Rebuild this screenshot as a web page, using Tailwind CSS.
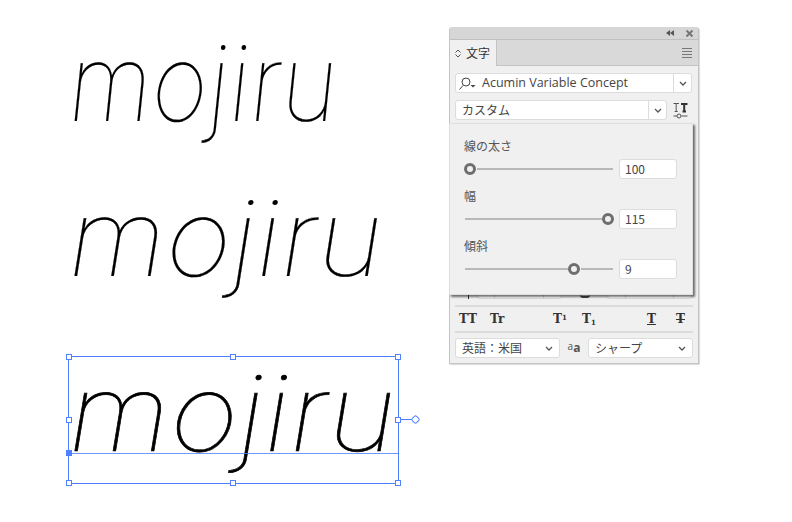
<!DOCTYPE html>
<html lang="ja">
<head>
    <meta charset="utf-8" />
    <title>mojiru</title>
    <script src="https://cdn.jsdelivr.net/npm/@tailwindcss/browser@4"></script>
</head>
<body class="relative w-[792px] h-[522px] overflow-hidden bg-white font-['Noto_Sans_CJK_JP','Noto_Sans',sans-serif]">
    <!-- artboard text -->
    <div class="absolute left-[68px] top-[18px] text-[106px] leading-[130px] italic font-thin text-black font-['Inter',sans-serif] whitespace-nowrap origin-left scale-x-[0.91] skew-x-[3deg] [-webkit-text-stroke:0.15px_black]">mojiru</div>
    <div class="absolute left-[68px] top-[173px] text-[106px] leading-[130px] italic font-thin text-black font-['Inter',sans-serif] whitespace-nowrap origin-left scale-x-[1.065] skew-x-[1deg] [-webkit-text-stroke:0.2px_black]">mojiru</div>
    <div class="absolute left-[68px] top-[348px] text-[106px] leading-[130px] italic font-thin text-black font-['Inter',sans-serif] whitespace-nowrap origin-left scale-x-[1.11] skew-x-[1deg] [-webkit-text-stroke:0.65px_black]">mojiru</div>

    <!-- selection box -->
    <div class="absolute left-[68px] top-[356px] w-[331px] h-[128px] border border-[#4f80ff]">
        <div class="absolute left-0 right-0 top-[96px] h-px bg-[#4f80ff]/80"></div>
        <div class="absolute -left-[3px] top-[93px] w-[6px] h-[6px] bg-[#4f80ff]"></div>
        <div class="absolute -left-[3px] -top-[3px] w-[6px] h-[6px] bg-white border border-[#4f80ff]"></div>
        <div class="absolute left-[161px] -top-[3px] w-[6px] h-[6px] bg-white border border-[#4f80ff]"></div>
        <div class="absolute -right-[3px] -top-[3px] w-[6px] h-[6px] bg-white border border-[#4f80ff]"></div>
        <div class="absolute -left-[3px] top-[60px] w-[6px] h-[6px] bg-white border border-[#4f80ff]"></div>
        <div class="absolute -right-[3px] top-[60px] w-[6px] h-[6px] bg-white border border-[#4f80ff]"></div>
        <div class="absolute -left-[3px] -bottom-[3px] w-[6px] h-[6px] bg-white border border-[#4f80ff]"></div>
        <div class="absolute left-[161px] -bottom-[3px] w-[6px] h-[6px] bg-white border border-[#4f80ff]"></div>
        <div class="absolute -right-[3px] -bottom-[3px] w-[6px] h-[6px] bg-white border border-[#4f80ff]"></div>
        <div class="absolute -right-[14px] top-[62px] w-[11px] h-px bg-[#4f80ff]"></div>
        <div class="absolute -right-[21px] top-[59px] w-[7px] h-[7px] rotate-45 bg-white border border-[#4f80ff] rounded-[2px]"></div>
    </div>

    <!-- character panel -->
    <div class="absolute left-[449px] top-[27px] w-[250px] h-[337px] bg-[#f0f0f0] border-x border-b border-[#c4c4c4] rounded-t-[3px] shadow-[1px_1px_1px_rgba(0,0,0,0.15)] text-[12px] text-[#444] flex flex-col">
        <div class="h-[13px] bg-[#d6d6d6] border-b border-[#c0c0c0] flex items-center justify-end gap-[12px] pr-[5px] rounded-t-[3px]">
            <svg width="8" height="6" viewBox="0 0 8 6" fill="#555"><path d="M4 0v6L0 3zM8 0v6L4 3z"/></svg>
            <svg width="7" height="7" viewBox="0 0 7 7" stroke="#777" stroke-width="2"><path d="M0.500 0.500l6 6M6.500 0.500l-6 6"/></svg>
        </div>
        <div class="h-[26px] bg-[#d9d9d9] border-b border-[#c4c4c4] flex items-stretch justify-between">
            <div class="w-[47px] -mb-px bg-[#f0f0f0] border-r border-[#c4c4c4] flex items-center pl-[5px] gap-[5px] text-[12px] text-[#333]">
                <svg width="6" height="9" viewBox="0 0 6 9" fill="none" stroke="#555"><path d="M0.500 3.500L3 1l2.500 2.500M0.500 5.500L3 8l2.500-2.500"/></svg>
                <span>文字</span>
            </div>
            <div class="flex flex-col justify-center gap-[2px] pr-[6px]">
                <div class="w-[10px] h-px bg-[#777]"></div>
                <div class="w-[10px] h-px bg-[#777]"></div>
                <div class="w-[10px] h-px bg-[#777]"></div>
                <div class="w-[10px] h-px bg-[#777]"></div>
            </div>
        </div>
        <div class="flex-1 flex flex-col px-[5px] pt-[7px]">
            <div class="h-[20px] w-[237px] bg-white border border-[#dcdcdc] rounded-[3px] flex items-center">
                <svg class="ml-[2px]" width="18" height="13" viewBox="0 0 18 13" fill="none" stroke="#444"><circle cx="8" cy="5" r="4"/><path d="M5 8.500L1.500 12.500"/><path d="M12.500 8h5L15 10.500z" fill="#444" stroke="none"/></svg>
                <span class="ml-[6px] flex-1 text-[12.500px] font-['Open_Sans',sans-serif] text-[#444]">Acumin Variable Concept</span>
                <div class="w-[18px] h-full border-l border-[#dcdcdc] flex items-center justify-center">
                    <svg width="8" height="5" viewBox="0 0 8 5" fill="none" stroke="#555" stroke-width="1.300"><path d="M1 1l3 3 3-3"/></svg>
                </div>
            </div>
            <div class="mt-[7px] flex items-center gap-[6px]">
                <div class="h-[20px] w-[212px] bg-white border border-[#dcdcdc] rounded-[3px] flex items-center">
                    <span class="ml-[6px] flex-1 text-[12px] text-[#444]">カスタム</span>
                    <div class="w-[18px] h-full border-l border-[#dcdcdc] flex items-center justify-center">
                        <svg width="8" height="5" viewBox="0 0 8 5" fill="none" stroke="#555" stroke-width="1.300"><path d="M1 1l3 3 3-3"/></svg>
                    </div>
                </div>
                <svg width="15" height="17" viewBox="0 0 15 17" fill="none" stroke="#555"><path d="M0.500 1.500h5.500M3.200 1.500v8M1.700 9.500h3"/><path d="M8 2h6.500M11.200 2v7.500M9.500 9.500h3.500" stroke-width="2" stroke="#333"/><path d="M0.500 14h3.500M8.500 14h6"/><circle cx="6" cy="14" r="2"/></svg>
            </div>
            <!-- row hidden behind the popup -->
            <div class="mt-[159px] flex h-[20px]">
                <div class="w-[22px] flex items-end"><div class="ml-[13px] w-px h-[6px] bg-[#333]"></div></div>
                <div class="w-[85px] flex border border-[#dcdcdc] rounded-[3px] bg-white">
                    <div class="w-[17px] border-r border-[#dcdcdc] flex items-end justify-center pb-[3px]"><svg width="5" height="3" viewBox="0 0 5 3" fill="#333"><path d="M0 0h5L2.500 3z"/></svg></div>
                    <div class="flex-1"></div>
                    <div class="w-[18px] border-l border-[#dcdcdc]"></div>
                </div>
                <div class="w-[45px] flex items-end justify-center pb-[1px]"><div class="w-[10px] h-[3px] rounded-b-[5px] border-b-2 border-[#444]"></div></div>
                <div class="w-[85px] flex border border-[#dcdcdc] rounded-[3px] bg-white">
                    <div class="w-[18px] border-r border-[#dcdcdc] flex items-end justify-center pb-[3px]"><svg width="5" height="3" viewBox="0 0 5 3" fill="#333"><path d="M0 0h5L2.500 3z"/></svg></div>
                    <div class="flex-1"></div>
                    <div class="w-[18px] border-l border-[#dcdcdc]"></div>
                </div>
            </div>
            <div class="mt-[6px] h-[2px] bg-[#dcdcdc]"></div>
            <div class="h-[24px] flex items-center text-[12px] font-bold font-['DejaVu_Serif',serif] text-[#333]">
                <span class="ml-[4px] w-[31px] tracking-[0.5px]">TT</span>
                <span class="w-[63px]">Tr</span>
                <span class="w-[29px]">T<sup class="text-[7px]">1</sup></span>
                <span class="w-[65px]">T<sub class="text-[7px]">1</sub></span>
                <span class="w-[29px] underline">T</span>
                <span class="line-through">T</span>
            </div>
            <div class="h-[2px] bg-[#dcdcdc]"></div>
            <div class="mt-[5px] flex items-center text-[12px] text-[#444]">
                <div class="h-[20px] w-[105px] bg-white border border-[#dcdcdc] rounded-[3px] flex items-center justify-between px-[6px]">
                    <span>英語：米国</span>
                    <svg width="8" height="5" viewBox="0 0 8 5" fill="none" stroke="#555" stroke-width="1.300"><path d="M1 1l3 3 3-3"/></svg>
                </div>
                <span class="w-[28px] flex justify-center items-end font-['Open_Sans',sans-serif] text-[#555]"><span class="text-[10px] -translate-y-[3px]">a</span><span class="text-[12px] font-bold">a</span></span>
                <div class="h-[20px] w-[105px] bg-white border border-[#dcdcdc] rounded-[3px] flex items-center justify-between px-[6px]">
                    <span>シャープ</span>
                    <svg width="8" height="5" viewBox="0 0 8 5" fill="none" stroke="#555" stroke-width="1.300"><path d="M1 1l3 3 3-3"/></svg>
                </div>
            </div>
        </div>

        <!-- variable font popup -->
        <div class="absolute -left-px top-[96px] w-[244px] h-[172px] bg-[#f0f0f0] border border-[#dedede] shadow-[2px_2px_2px_rgba(0,0,0,0.55)] px-[14px] pt-[13px] flex flex-col text-[#555]">
            <div class="h-[18px] leading-[18px]">線の太さ</div>
            <div class="h-[20px] mt-[4px] flex items-center">
                <div class="w-[12px] h-[12px] rounded-full border-[3px] border-[#6e6e6e] shrink-0"></div>
                <div class="ml-px w-[136px] h-[2px] bg-[#b8b8b8]"></div>
                <div class="ml-[6px] w-[58px] h-[20px] bg-white border border-[#dcdcdc] rounded-[3px] px-[5px] leading-[18px] text-[#444]">100</div>
            </div>
            <div class="h-[18px] leading-[18px] mt-[8px]">幅</div>
            <div class="h-[20px] mt-[4px] flex items-center">
                <div class="ml-px w-[137px] h-[2px] bg-[#b8b8b8]"></div>
                <div class="w-[12px] h-[12px] rounded-full border-[3px] border-[#6e6e6e] shrink-0"></div>
                <div class="ml-[5px] w-[58px] h-[20px] bg-white border border-[#dcdcdc] rounded-[3px] px-[5px] leading-[18px] text-[#444]">115</div>
            </div>
            <div class="h-[18px] leading-[18px] mt-[8px]">傾斜</div>
            <div class="h-[20px] mt-[4px] flex items-center">
                <div class="ml-px w-[103px] h-[2px] bg-[#b8b8b8]"></div>
                <div class="w-[12px] h-[12px] rounded-full border-[3px] border-[#6e6e6e] shrink-0"></div>
                <div class="ml-px w-[32px] h-[2px] bg-[#b8b8b8]"></div>
                <div class="ml-[6px] w-[58px] h-[20px] bg-white border border-[#dcdcdc] rounded-[3px] px-[5px] leading-[18px] text-[#444]">9</div>
            </div>
        </div>
    </div>
</body>
</html>
